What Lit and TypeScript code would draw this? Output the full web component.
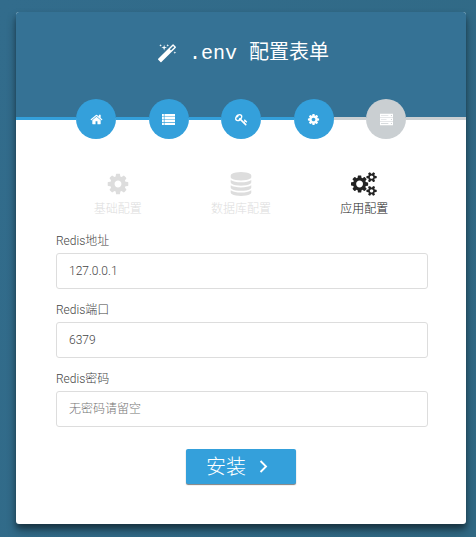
import { LitElement, html, css, svg } from "lit";
import { customElement, state } from "lit/decorators.js";

interface Glyph {
  width: number;
  d: string;
}

const SMALL_COG =
  "v140q0 16-149 31-12 27-30 52 51 113 51 138 0 4-4 7-122 71-124 71-8 0-46-47t-52-68q-20 2-30 2t-30-2q-14 21-52 68t-46 47q-2 0-124-71-4-3-4-7 0-25 51-138-18-25-30-52-149-15-149-31v-140q0-16 149-31 13-29 30-52-51-113-51-138 0-4 4-7 4-2 35-20t59-34 30-16q8 0 46 46.500t52 67.500q20-2 30-2t30 2q51-71 92-112l6-2q4 0 124 70 4 3 4 7 0 25-51 138 17 23 30 52 149 15 149 31z";

const GLYPHS: Record<string, Glyph> = {
  magic: {
    width: 1792,
    d: "M1254 581l293-293-107-107-293 293zm447-293q0 27-18 45l-1286 1286q-18 18-45 18t-45-18l-198-198q-18-18-18-45t18-45l1286-1286q18-18 45-18t45 18l198 198q18 18 18 45zm-1351-190l98 30-98 30-30 98-30-98-98-30 98-30 30-98zm350 162l196 60-196 60-60 196-60-196-196-60 196-60 60-196zm930 478l98 30-98 30-30 98-30-98-98-30 98-30 30-98zm-640-640l98 30-98 30-30 98-30-98-98-30 98-30 30-98z",
  },
  home: {
    width: 1792,
    d: "M1472 992v480q0 26-19 45t-45 19h-384v-384h-256v384h-384q-26 0-45-19t-19-45v-480q0-1 .5-3t.5-3l575-474 575 474q1 2 1 6zm223-69l-62 74q-8 9-21 11h-3q-13 0-21-7l-692-577-692 577q-12 8-24 7-13-2-21-11l-62-74q-8-10-7-23.500t11-21.500l719-599q32-26 76-26t76 26l244 204v-195q0-14 9-23t23-9h192q14 0 23 9t9 23v408l219 182q10 8 11 21.500t-7 23.500z",
  },
  list: {
    width: 1792,
    d: "M0 128h256v320h-256zM340 128h1452v320h-1452zM0 530h256v320h-256zM340 530h1452v320h-1452zM0 932h256v320h-256zM340 932h1452v320h-1452zM0 1334h256v320h-256zM340 1334h1452v320h-1452z",
  },
  key: {
    width: 1792,
    d: "M832 512q0-80-56-136t-136-56-136 56-56 136q0 42 19 83-41-19-83-19-80 0-136 56t-56 136 56 136 136 56 136-56 56-136q0-42-19-83 41 19 83 19 80 0 136-56t56-136zm851 704q0 17-49 66t-66 49q-9 0-28.500-16t-36.500-33-38.500-40-24.500-26l-96 96 220 220q28 28 28 68 0 42-39 81t-81 39q-40 0-68-28l-671-671q-176 131-365 131-163 0-265.500-102.500t-102.500-265.500q0-160 95-313t248-248 313-95q163 0 265.500 102.500t102.500 265.500q0 189-131 365l355 355 96-96q-3-3-26-24.500t-40-38.500-33-36.500-16-28.500q0-17 49-66t66-49q13 0 23 10 6 6 46 44.500t82 79.500 86.500 86 73 78 28.500 41z",
  },
  cog: {
    width: 1792,
    d: "M1152 896q0-106-75-181t-181-75-181 75-75 181 75 181 181 75 181-75 75-181zm512-109v222q0 12-8 23t-20 13l-185 28q-19 54-39 91 35 50 107 138 10 12 10 25t-9 23q-27 37-99 108t-94 71q-12 0-26-9l-138-108q-44 23-91 38-16 136-29 186-7 28-36 28h-222q-14 0-24.500-8.500t-11.500-21.500l-28-184q-49-16-90-37l-141 107q-10 9-25 9-14 0-25-11-126-114-165-168-7-10-7-23 0-12 8-23 15-21 51-66.500t54-70.500q-27-50-41-99l-183-27q-13-2-21-12.500t-8-23.500v-222q0-12 8-23t19-13l186-28q14-46 39-92-40-57-107-138-10-12-10-24 0-10 9-23 26-36 98.500-107.500t94.500-71.500q13 0 26 10l138 107q44-23 91-38 16-136 29-186 7-28 36-28h222q14 0 24.500 8.500t11.500 21.500l28 184q49 16 90 37l142-107q9-9 24-9 13 0 25 10 129 119 165 170 7 8 7 22 0 12-8 23-15 21-51 66.500t-54 70.500q26 50 41 98l183 28q13 2 21 12.500t8 23.500z",
  },
  server: {
    width: 1792,
    d: "M0 96h1792v500h-1792zM128 300v90h1024v-90zM1504 280v130h140v-130zM0 650h1792v500h-1792zM128 850v90h768v-90zM1504 830v130h140v-130zM0 1204h1792v500h-1792zM128 1410v90h1024v-90zM1504 1390v130h140v-130z",
  },
  database: {
    width: 1792,
    d: "M896 768q237 0 443-43t325-127v170q0 69-103 128t-280 93.500-385 34.500-385-34.500-280-93.500-103-128v-170q119 84 325 127t443 43zm0 768q237 0 443-43t325-127v170q0 69-103 128t-280 93.500-385 34.500-385-34.500-280-93.500-103-128v-170q119 84 325 127t443 43zm0-384q237 0 443-43t325-127v170q0 69-103 128t-280 93.500-385 34.500-385-34.500-280-93.500-103-128v-170q119 84 325 127t443 43zm0-1152q208 0 385 34.500t280 93.500 103 128v128q0 69-103 128t-280 93.500-385 34.500-385-34.500-280-93.500-103-128v-128q0-69 103-128t280-93.500 385-34.500z",
  },
  cogs: {
    width: 1920,
    d:
      "M896 896q0-106-75-181t-181-75-181 75-75 181 75 181 181 75 181-75 75-181zm768 512q0-52-38-90t-90-38-90 38-38 90q0 53 37.500 90.500t90.500 37.500 90.500-37.500 37.500-90.500zm0-1024q0-52-38-90t-90-38-90 38-38 90q0 53 37.500 90.500t90.500 37.500 90.500-37.500 37.500-90.500zm-384 421v185q0 10-7 19.500t-16 10.500l-155 24q-11 35-32 76 34 48 90 115 7 10 7 20 0 12-7 19-23 30-82.500 89.500t-78.500 59.500q-11 0-21-7l-115-90q-37 19-77 31-11 108-23 155-7 24-30 24h-186q-11 0-20-7.500t-10-17.500l-23-153q-34-10-75-31l-118 89q-7 7-20 7-11 0-21-8-144-133-144-160 0-9 7-19 10-14 41-53t47-61q-23-44-35-82l-152-24q-10-1-17-9.500t-7-19.500v-185q0-10 7-19.500t16-10.500l155-24q11-35 32-76-34-48-90-115-7-11-7-20 0-12 7-20 22-30 82-89t79-59q11 0 21 7l115 90q34-18 77-32 11-108 23-154 7-24 30-24h186q11 0 20 7.500t10 17.500l23 153q34 10 75 31l118-89q8-7 20-7 11 0 21 8 144 133 144 160 0 9-7 19-12 16-42 54t-45 60q23 48 34 82l152 23q10 2 17 10.500t7 19.500z" +
      "M1920 1338" + SMALL_COG + "M1920 314" + SMALL_COG,
  },
  chevron: {
    width: 1792,
    d: "M460 320L620 160L1356 896L620 1632L460 1472L1036 896Z",
  },
};

const icon = (name: string, cls: string) => {
  const g = GLYPHS[name];
  return html`<svg class="icon ${cls}" viewBox="0 0 ${g.width} 1792" aria-hidden="true">
    ${svg`<path fill-rule="evenodd" d=${g.d}></path>`}
  </svg>`;
};

@customElement("app-root")
export class AppRoot extends LitElement {
  static styles = css`
    :host {
      display: block;
      box-sizing: border-box;
      min-height: 100vh;
      padding: 12px 10px 12px 16px;
      background: linear-gradient(115deg, #326c8c, #306984);
      font-family: Roboto, "Noto Sans CJK SC", sans-serif;
      font-size: 12px;
      font-weight: 300;
      line-height: 18px;
      color: #333;
    }
    * {
      box-sizing: border-box;
    }
    .icon {
      display: block;
      fill: currentColor;
      flex: none;
    }
    .card {
      border-radius: 3px;
      background: #fff;
      box-shadow: 0 6px 10px rgba(0, 0, 0, 0.4), 0 4px 4px rgba(0, 0, 0, 0.2);
    }
    .header {
      display: flex;
      align-items: center;
      justify-content: center;
      height: 84px;
      border-radius: 3px 3px 0 0;
      background: #357295;
    }
    .title {
      display: flex;
      align-items: center;
      gap: 12px;
      margin: 0;
      padding-left: 4px;
      color: #fff;
      font: 400 20px/28px "Liberation Mono", "Noto Sans CJK SC", monospace;
    }
    .wand {
      width: 20px;
      height: 20px;
    }
    .steps {
      display: flex;
      align-items: center;
      height: 46px;
      margin: 0;
      padding: 0;
      background: linear-gradient(#357295 22px, #fff 22px);
    }
    .bar {
      flex: 1;
      height: 3px;
      margin-bottom: 1px;
      background: #34a0db;
    }
    .bar.edge {
      flex: 0 0 60px;
    }
    .bar.off,
    .step.off {
      background: #cacfd2;
    }
    .step {
      display: flex;
      align-items: center;
      justify-content: center;
      width: 40px;
      height: 40px;
      border-radius: 50%;
      background: #34a0db;
      color: #fff;
      text-decoration: none;
    }
    .step-icon {
      width: 13px;
      height: 13px;
    }
    .main {
      padding: 30px 38px 40px 40px;
    }
    .tabs {
      display: grid;
      grid-template-columns: repeat(3, 1fr);
      margin: 0 2px 14px 0;
    }
    .tab {
      display: flex;
      flex-direction: column;
      align-items: center;
      gap: 4px;
      padding: 0;
      border: 0;
      background: none;
      color: #ddd;
      font: inherit;
      cursor: pointer;
    }
    .tab.active {
      color: #222;
    }
    .tab-icon {
      height: 24px;
    }
    .fields {
      display: grid;
      gap: 12px;
    }
    .field {
      display: flex;
      flex-direction: column;
      gap: 3px;
    }
    .label {
      color: #444;
    }
    .input {
      width: 100%;
      height: 36px;
      padding: 0 12px;
      border: 1px solid #ddd;
      border-radius: 3px;
      background: #fff;
      color: #444;
      font: inherit;
      outline: none;
    }
    .input::placeholder {
      color: #757575;
      opacity: 1;
    }
    .actions {
      display: flex;
      justify-content: center;
      margin: 22px 2px 0 0;
    }
    .button {
      display: flex;
      align-items: center;
      gap: 10px;
      height: 35px;
      padding: 0 25px 0 20px;
      border: 0;
      border-radius: 2px;
      background: #34a0db;
      box-shadow: 0 1px 1px rgba(0, 0, 0, 0.5);
      color: #fff;
      font: inherit;
      font-size: 20px;
      cursor: pointer;
    }
    .go {
      width: 15px;
      height: 15px;
    }
  `;

  private steps = [
    { icon: "home", name: "欢迎", on: true },
    { icon: "list", name: "环境要求", on: true },
    { icon: "key", name: "权限", on: true },
    { icon: "cog", name: "配置", on: true },
    { icon: "server", name: "完成", on: false },
  ];

  private tabs = [
    { icon: "cog", label: "基础配置" },
    { icon: "database", label: "数据库配置" },
    { icon: "cogs", label: "应用配置" },
  ];

  private fields = [
    { id: "redis-host", label: "Redis地址", value: "127.0.0.1", hint: "", type: "text" },
    { id: "redis-port", label: "Redis端口", value: "6379", hint: "", type: "text" },
    { id: "redis-password", label: "Redis密码", value: "", hint: "无密码请留空", type: "password" },
  ];

  @state() private activeTab = 2;

  render() {
    return html`
      <div class="card">
        <header class="header">
          <h1 class="title">${icon("magic", "wand")}<span>.env 配置表单</span></h1>
        </header>
        <nav class="steps">
          <span class="bar edge"></span>
          ${this.steps.map(
            (s, i) => html`
              ${i ? html`<span class="bar ${s.on ? "" : "off"}"></span>` : ""}
              <a class="step ${s.on ? "" : "off"}" href="#" aria-label=${s.name}>${icon(s.icon, "step-icon")}</a>
            `
          )}
          <span class="bar edge off"></span>
        </nav>
        <form class="main" @submit=${(e: Event) => e.preventDefault()}>
          <div class="tabs" role="tablist">
            ${this.tabs.map(
              (t, i) => html`<button
                type="button"
                role="tab"
                aria-selected=${i === this.activeTab}
                class="tab ${i === this.activeTab ? "active" : ""}"
                @click=${() => (this.activeTab = i)}
              >
                ${icon(t.icon, "tab-icon")}<span>${t.label}</span>
              </button>`
            )}
          </div>
          <div class="fields">
            ${this.fields.map(
              (f) => html`<div class="field">
                <label class="label" for=${f.id}>${f.label}</label>
                <input class="input" id=${f.id} type=${f.type} .value=${f.value} placeholder=${f.hint} />
              </div>`
            )}
          </div>
          <div class="actions">
            <button class="button" type="submit"><span>安装</span>${icon("chevron", "go")}</button>
          </div>
        </form>
      </div>
    `;
  }
}
